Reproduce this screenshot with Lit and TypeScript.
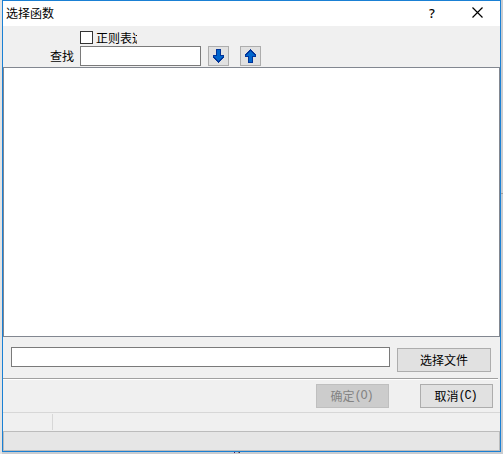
import { LitElement, html, css, svg } from "lit";
import { customElement, property } from "lit/decorators.js";

@customElement("arrow-button")
class ArrowButton extends LitElement {
  @property() direction = "down";

  static styles = css`
    :host { display: block; }
    .button {
      display: flex; align-items: center; justify-content: center;
      box-sizing: border-box; width: 21px; height: 20px; padding: 0;
      border: 1px solid #adadad; background: #e1e1e1;
    }
    svg { display: block; }
  `;

  render() {
    const arrow = svg`
      <path fill="#003399" d="M3 0H8V6H11V9H10V10H9V11H8V12H7V13H6V14H5V13H4V12H3V11H2V10H1V9H0V6H3Z"/>
      <path fill="#0066cc" d="M4 1H7V7H10V8H9V9H8V10H7V11H6V12H5V11H4V10H3V9H2V8H1V7H4Z"/>`;
    return html`<button class="button" aria-label=${this.direction}>
      <svg width="11" height="14" viewBox="0 0 11 14" shape-rendering="crispEdges">
        <g transform=${this.direction === "down" ? "" : "matrix(1 0 0 -1 0 14)"}>${arrow}</g>
      </svg>
    </button>`;
  }
}

@customElement("app-root")
class AppRoot extends LitElement {
  static styles = css`
    :host {
      display: block; box-sizing: border-box; width: 503px; height: 454px;
      padding: 0 2px 2px; overflow: hidden; position: relative;
      background: linear-gradient(90deg, #e4e4e4 0 2px, #c9ccd0 2px 100%);
      font: 12px/14px "Noto Sans CJK SC", sans-serif; color: #000;
    }
    * { box-sizing: border-box; }
    .window {
      display: flex; flex-direction: column; width: 499px; height: 452px;
      border: 1px solid #1a80d4; background: #f0f0f0;
    }
    .title { display: flex; align-items: center; height: 25px; padding: 0 17px 2px 3px; background: #fff; }
    .name { flex: 1; }
    .help { width: 6px; margin-right: 37px; font: 500 13px/14px "Noto Sans", sans-serif; }
    .tools { display: grid; grid-template-columns: 77px 1fr; grid-template-rows: 15px 21px; padding-top: 5px; height: 41px; flex: none; }
    .option { grid-column: 2; display: flex; align-items: flex-start; }
    .check { width: 13px; height: 13px; border: 1px solid #333; background: #fff; }
    .clip { width: 41px; margin-left: 3px; overflow: hidden; white-space: nowrap; }
    .caption { text-align: right; padding-right: 6px; line-height: 20px; }
    .find { display: flex; }
    .field { height: 20px; border: 1px solid #7a7a7a; background: #fff; }
    .search { width: 121px; margin-right: 7px; }
    .next { margin-right: 11px; }
    .list { flex: none; height: 270px; border: 1px solid #828790; background: #fff; }
    .file { display: flex; height: 41px; flex: none; padding: 10px 8px 0; }
    .path { width: 379px; margin-right: 7px; }
    .button {
      display: flex; align-items: center; justify-content: center; height: 24px;
      padding: 0; border: 1px solid #adadad; background: #e1e1e1; color: #000; font: inherit;
    }
    .browse { width: 94px; margin-top: 1px; }
    .rule { flex: none; height: 2px; width: 495px; border-top: 1px solid #a0a0a0; background: #fff; }
    .actions { display: flex; justify-content: flex-end; gap: 31px; flex: none; height: 32px; padding: 4px 7px 0; }
    .action { width: 73px; padding-right: 2px; }
    .disabled { background: #ccc; border-color: #bfbfbf; color: #838383; }
    .key { font: 12px/14px "Liberation Mono", monospace; letter-spacing: -1.2px; }
    .status { flex: none; height: 19px; padding-top: 1px; border-top: 1px solid #d7d7d7; }
    .cell { width: 50px; height: 16px; border-right: 1px solid #d7d7d7; }
    .progress { flex: 1; border: 1px solid #bcbcbc; background: #e6e6e6; }
    .tick { position: absolute; left: 501px; top: 193px; width: 2px; height: 1px; background: #a0a0a0; }
    .speck { position: absolute; top: 452px; left: 234px; width: 6px; height: 1px; background: linear-gradient(90deg, #50205c 0 1px, #c4c4c8 1px 4px, #a08068 4px 5px, #38385c 5px); }
  `;

  render() {
    return html`
      <div class="window">
        <div class="title">
          <span class="name">选择函数</span>
          <span class="help">?</span>
          <svg width="11" height="11" viewBox="0 0 11 11" stroke="#000" stroke-width="1.2" fill="none"><path d="M.5 .5L10.5 10.5M10.5 .5L.5 10.5"/></svg>
        </div>
        <div class="tools">
          <div class="option"><span class="check"></span><span class="clip">正则表达式</span></div>
          <div class="caption">查找</div>
          <div class="find">
            <div class="field search"></div>
            <arrow-button class="next" direction="down"></arrow-button>
            <arrow-button direction="up"></arrow-button>
          </div>
        </div>
        <div class="list"></div>
        <div class="file">
          <div class="field path"></div>
          <button class="button browse">选择文件</button>
        </div>
        <div class="rule"></div>
        <div class="actions">
          <button class="button action disabled" disabled>确定<span class="key">(O)</span></button>
          <button class="button action">取消<span class="key">(C)</span></button>
        </div>
        <div class="status"><div class="cell"></div></div>
        <div class="progress"></div>
      </div>
      <div class="tick"></div>
      <div class="speck"></div>
    `;
  }
}
